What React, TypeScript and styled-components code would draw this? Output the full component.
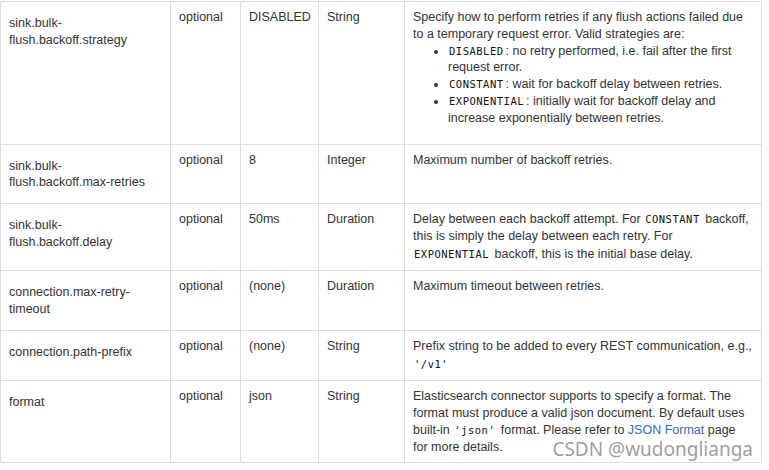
import styled, { createGlobalStyle } from "styled-components";

interface RowData {
	key: string;
	required: string;
	fallback: string;
	type: string;
	description: React.ReactNode;
}

const GlobalStyle = createGlobalStyle`
	body {
		margin: 0;
		background: #fff;
	}
`;

// built lazily so the styled parts below are defined by then
const getRows = (): RowData[] => [
	{
		key: "sink.bulk-flush.backoff.strategy",
		required: "optional",
		fallback: "DISABLED",
		type: "String",
		description: (
			<>
				Specify how to perform retries if any flush actions failed due to a temporary request error. Valid
				strategies are:
				<List>
					<li>
						<Code>DISABLED</Code>: no retry performed, i.e. fail after the first request error.
					</li>
					<li>
						<Code>CONSTANT</Code>: wait for backoff delay between retries.
					</li>
					<li>
						<Code>EXPONENTIAL</Code>: initially wait for backoff delay and increase exponentially between
						retries.
					</li>
				</List>
			</>
		),
	},
	{
		key: "sink.bulk-flush.backoff.max-retries",
		required: "optional",
		fallback: "8",
		type: "Integer",
		description: "Maximum number of backoff retries.",
	},
	{
		key: "sink.bulk-flush.backoff.delay",
		required: "optional",
		fallback: "50ms",
		type: "Duration",
		description: (
			<>
				Delay between each backoff attempt. For <Code>CONSTANT</Code> backoff, this is simply the delay between
				each retry. For <Code tall>EXPONENTIAL</Code> backoff, this is the initial base delay.
			</>
		),
	},
	{
		key: "connection.max-retry-timeout",
		required: "optional",
		fallback: "(none)",
		type: "Duration",
		description: "Maximum timeout between retries.",
	},
	{
		key: "connection.path-prefix",
		required: "optional",
		fallback: "(none)",
		type: "String",
		description: (
			<>
				Prefix string to be added to every REST communication, e.g., <Code tall>'/v1'</Code>
			</>
		),
	},
	{
		key: "format",
		required: "optional",
		fallback: "json",
		type: "String",
		description: (
			<>
				Elasticsearch connector supports to specify a format. The format must produce a valid json document. By
				default uses built-in <Code>'json'</Code> format. Please refer to <Link href="#">JSON Format</Link> page
				<br />
				for more details.
			</>
		),
	},
];

function App() {
	const rows = getRows();
	return (
		<Page>
			<GlobalStyle />
			<Table>
				<colgroup>
					<col style={{ width: 170 }} />
					<col style={{ width: 70 }} />
					<col style={{ width: 78 }} />
					<col style={{ width: 86 }} />
					<col />
				</colgroup>
				<tbody>
					{rows.map((row) => (
						<tr key={row.key}>
							<KeyCell>{row.key.replace("bulk-", "bulk-\u200b")}</KeyCell>
							<Cell>{row.required}</Cell>
							<Cell nowrap>{row.fallback}</Cell>
							<Cell>{row.type}</Cell>
							<Cell>{row.description}</Cell>
						</tr>
					))}
				</tbody>
			</Table>
			<Watermark>CSDN @wudonglianga</Watermark>
		</Page>
	);
}

export default App;

const Page = styled.div`
	position: relative;
	width: 762px;
	padding-top: 1px;
	font-family: "Liberation Sans", Arial, sans-serif;
	font-size: 12.5px;
	line-height: 16.8px;
	color: #333;
`;

const Table = styled.table`
	width: 762px;
	table-layout: fixed;
	border-collapse: collapse;
`;

const Cell = styled.td<{ nowrap?: boolean }>`
	vertical-align: top;
	padding: 7px 8px;
	border: 1px solid #ddd;
	word-wrap: break-word;
	white-space: ${({ nowrap }) => (nowrap ? "nowrap" : "normal")};
`;

const KeyCell = styled(Cell)`
	padding: 13px 8px 12px;
`;

const List = styled.ul`
	margin: 0 0 10px;
	padding-left: 35px;
	list-style: disc;
`;

// "tall" code sits on a slightly taller line, as in the docs page
const Code = styled.code<{ tall?: boolean }>`
	display: inline-block;
	padding: 0 2px 0 1px;
	font-family: "DejaVu Sans Mono", monospace;
	font-size: 10.5px;
	line-height: ${({ tall }) => (tall ? "18.5px" : "16.8px")};
	letter-spacing: 0.5px;
	color: #111;
`;

const Link = styled.a`
	color: #2f6db5;
	text-decoration: none;
`;

const Watermark = styled.div`
	position: absolute;
	top: 437px;
	right: 9px;
	font-family: "Noto Sans", "Noto Sans CJK SC", sans-serif;
	font-size: 19px;
	line-height: 24px;
	color: rgba(140, 140, 140, 0.85);
	text-shadow: 0 0 1px #fff;
	pointer-events: none;
`;
